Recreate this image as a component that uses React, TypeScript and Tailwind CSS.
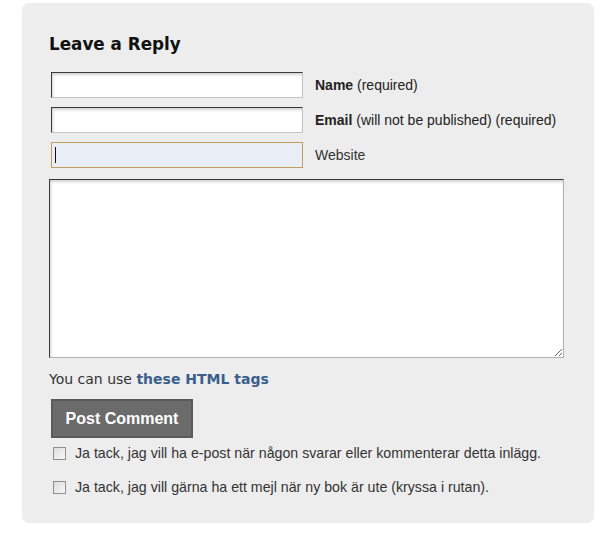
export default function App() {
  const field =
    "w-[252px] h-[26px] ml-[2px] bg-white border border-t-[#3a3a3a] border-l-[#3a3a3a] border-r-[#c4c4c4] border-b-[#c4c4c4] shadow-[inset_1px_2px_3px_rgba(0,0,0,0.18)] outline-none px-1 text-[14px]"

  return (
    <div className="min-h-screen bg-white pt-[3px] pl-[22px]">
      <div className="w-[572px] h-[520px] rounded-[7px] bg-[#ededed] pt-[31px] px-[27px] text-[#333] font-['Liberation_Sans',Arial,sans-serif]">

        <h3 className="text-[16.8px] leading-[20px] font-bold text-[#111] font-['DejaVu_Sans',Verdana,sans-serif]">
          Leave a Reply
        </h3>

        {/* ================= FIELDS ================= */}

        <div className="mt-[18px] flex flex-col gap-[9px]">
          <div className="flex items-center gap-3">
            <input type="text" className={field} />
            <label className="text-[14px] text-[#222]">
              <b>Name</b> (required)
            </label>
          </div>

          <div className="flex items-center gap-3">
            <input type="text" className={field} />
            <label className="text-[14px] text-[#222]">
              <b>Email</b> (will not be published) (required)
            </label>
          </div>

          <div className="flex items-center gap-3">
            <div className="w-[252px] h-[26px] ml-[2px] bg-[#e9eef6] border border-[#c29e5c] flex items-center pl-[3px]">
              <span className="w-px h-[16px] bg-[#111]" />
            </div>
            <label className="text-[14px] text-[#333]">Website</label>
          </div>
        </div>

        <textarea
          className="mt-[11px] block w-[515px] h-[179px] bg-white border border-t-[#3a3a3a] border-l-[#3a3a3a] border-r-[#b0b0b0] border-b-[#b0b0b0] shadow-[inset_1px_2px_3px_rgba(0,0,0,0.18)] outline-none"
        />

        <p className="mt-[12px] text-[14px] leading-[18px] text-[#333] font-['DejaVu_Sans',Verdana,sans-serif]">
          You can use <a className="font-bold text-[#3b5e8c]">these HTML tags</a>
        </p>

        <button className="mt-[11px] ml-[2px] w-[142px] h-[39px] bg-[#6b6b6b] border-2 border-[#5a5a5a] text-white text-[16px] font-bold">
          Post Comment
        </button>

        {/* ================= CHECKBOXES ================= */}

        <div className="mt-[7px] flex flex-col gap-[18px] text-[14.2px] leading-[16px] text-[#333]">
          <label className="flex items-center gap-[9px] ml-[4px]">
            <span className="w-[13px] h-[13px] border border-[#8f8f8f] bg-gradient-to-br from-[#dcdcdc] to-[#f8f8f8]" />
            Ja tack, jag vill ha e-post när någon svarar eller kommenterar detta inlägg.
          </label>
          <label className="flex items-center gap-[9px] ml-[4px]">
            <span className="w-[13px] h-[13px] border border-[#8f8f8f] bg-gradient-to-br from-[#dcdcdc] to-[#f8f8f8]" />
            Ja tack, jag vill gärna ha ett mejl när ny bok är ute (kryssa i rutan).
          </label>
        </div>

      </div>
    </div>
  )
}
